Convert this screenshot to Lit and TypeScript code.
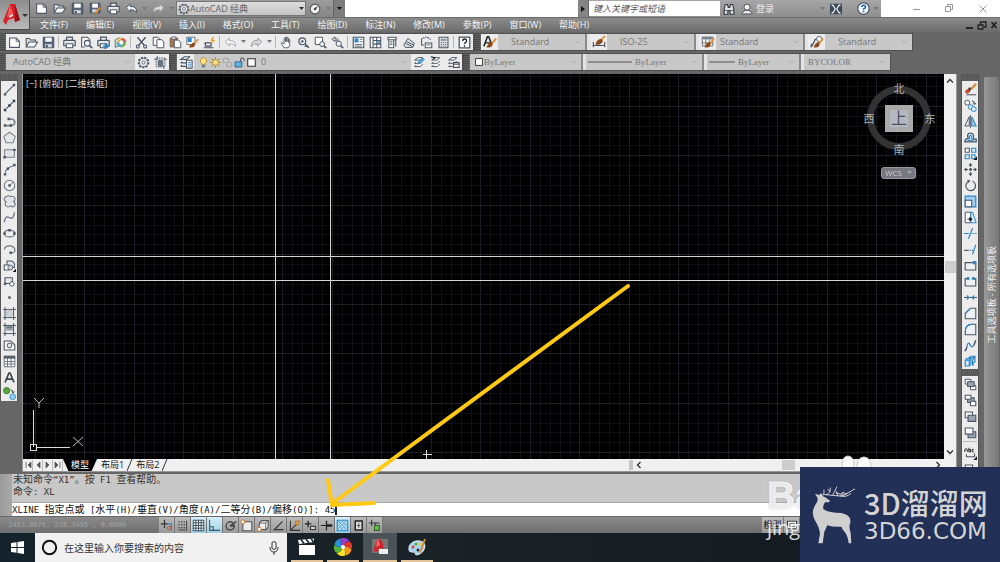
import { LitElement, html, svg, css, type TemplateResult } from "lit";
import { customElement, property } from "lit/decorators.js";
import { classMap } from "lit/directives/class-map.js";

/* ---------- icon set, drawn on a 16 x 16 board ---------- */
const S = "#4b5563";
const B = "#2f86c4";
const O = "#d9761e";

const sheet = svg`<path d="M2 2.500h8l4 4v7.500h-12z" fill="#fff" stroke=${S} stroke-width="1.3"/><path d="M10 2.500v4h4" fill="none" stroke=${S}/>`;
const printer = svg`<path d="M4.500 5V1.500h7V5M2 5.500h12q1 0 1 1V12h-14V6.500q0-1 1-1z" fill="#e8eaec" stroke=${S} stroke-width="1.5"/><path d="M4 9.500h8v5h-8z" fill="#fff" stroke=${S} stroke-width="1.3"/>`;
const gear = svg`<circle cx="8" cy="8" r="6.200" fill="none" stroke=${S} stroke-width="2" stroke-dasharray="2.600 1.600"/><circle cx="8" cy="8" r="5" fill="#eee" stroke=${S}/><circle cx="8" cy="8" r="2" fill="#fff" stroke=${S}/>`;
const brush = svg`<path d="M15 4l-5 6" stroke="#e39a4b" stroke-width="2.400"/><path d="M11 9l-2-1q-4 2-5 6q4 1 6.500-1.500z" fill="#8a4a1c"/>`;
const lens = svg`<circle cx="6.500" cy="6.500" r="4.200" fill="#eef4f8" stroke=${S} stroke-width="1.400"/><path d="M10 10l4.500 4.500" stroke=${S} stroke-width="2"/>`;
const layers = svg`<path d="M2 5h7l3-3H6zM2 9h7l3-3M2 9l1.500-1.500M2 13h7l3-3M2 13l1.500-1.500" fill="#fff" stroke=${S} stroke-width="1.200"/>`;

const ICONS: Record<string, TemplateResult> = {
  new: sheet,
  open: svg`<path d="M1.500 13V3h4l1.500 2h6v2" fill="#dfe3e6" stroke=${S} stroke-width="1.300"/><path d="M1.500 13.500l3.500-6h10.500l-4 6z" fill="#f4f6f7" stroke=${S} stroke-width="1.300"/>`,
  save: svg`<path d="M1.500 1.500h13v13h-13z" fill="#56657a" stroke="#3c4858"/><path d="M4 2h8v5H4z" fill="#fff"/><path d="M4 10h8v4H4z" fill="#d4d9de"/><path d="M5 11h2v3H5z" fill="#3c4858"/>`,
  saveAs: svg`<path d="M1.500 1.500h12v12h-12z" fill="#56657a" stroke="#3c4858"/><path d="M4 2h7v5H4z" fill="#fff"/><path d="M4 9h7v4H4z" fill="#d4d9de"/><path d="M15 7l-6 7-2 1 1-3 5-6z" fill="#f0a63c" stroke="#8a5a1c" stroke-width=".600"/>`,
  print: printer,
  preview: svg`<path d="M2 1.500h7l3 3v3M2 1.500v12h4" fill="#fff" stroke=${S} stroke-width="1.300"/><circle cx="9" cy="9" r="3.600" fill="#eef4f8" stroke=${S} stroke-width="1.300"/><path d="M11.500 11.500l3.500 3.500" stroke=${S} stroke-width="2"/>`,
  publish: svg`${printer}<path d="M7 12.500h5M10 9.500l4.500 3-4.500 3z" fill=${B} stroke=${B} stroke-width="1.500"/>`,
  globe: svg`<path d="M1.500 5l5-3v10l-5 2z" fill="#dfe3e6" stroke=${S}/><circle cx="9" cy="8" r="6" fill="#f6d25c"/><path d="M9 2a6 6 0 0 1 6 6H9z" fill="#e15b50"/><path d="M9 14a6 6 0 0 1-6-6h6z" fill="#49b0e0"/><path d="M15 8a6 6 0 0 1-6 6V8z" fill="#6dbb5a"/><path d="M9 4.500l3 1.700v3.600l-3 1.700-3-1.700V6.200z" fill="#fff" stroke=${S} stroke-width=".700"/>`,
  cut: svg`<path d="M3 1.500l8.500 10M13 1.500l-8.500 10" stroke=${S} stroke-width="1.700"/><circle cx="3.500" cy="13" r="1.900" fill="none" stroke=${S} stroke-width="1.300"/><circle cx="12.500" cy="13" r="1.900" fill="none" stroke=${S} stroke-width="1.300"/>`,
  copy: svg`<path d="M1.500 1.500h6l2 2v8h-8z" fill="#fff" stroke=${S} stroke-width="1.200"/><path d="M6 4.500h6l2.500 2.500v7.500H6z" fill="#fff" stroke=${S} stroke-width="1.200"/>`,
  paste: svg`<path d="M1.500 2.500h9v11h-9z" fill="#a7784e" stroke="#6d5a4a"/><path d="M3.500 1h5v3h-5z" fill="#d6d9dc" stroke=${S} stroke-width=".800"/><path d="M6.500 5h5l3 3v6.500h-8z" fill="#fff" stroke=${S} stroke-width="1.200"/>`,
  match: svg`<path d="M1 1.500h10v9H1z" fill="#fff" stroke=${S}/><path d="M2 2.500h5v5H2z" fill=${B}/>${brush}`,
  blockEdit: svg`<path d="M3 8.500h7v4H3zM1 14.500h12" fill="none" stroke=${S} stroke-width="1.400"/><path d="M12 1l-3 5h3l-1.500 4L15 5h-3l1.500-4z" fill="#f2a11e"/><path d="M1 10l2-2" stroke=${S}/>`,
  undo: svg`<path d="M1.500 7l5-4.500v3q8-.5 8 7.500q-2.500-4-8-3.500v3z" fill="#f2f3f4" stroke=${S} stroke-width="1.200"/>`,
  redo: svg`<path d="M14.500 7l-5-4.500v3q-8-.5-8 7.500q2.500-4 8-3.500v3z" fill="#d9dadb" stroke="#9a9da1" stroke-width="1.200"/>`,
  undoDim: svg`<path d="M1.500 7l5-4.500v3q8-.5 8 7.500q-2.500-4-8-3.500v3z" fill="#f4f4f4" stroke="#a3a6aa" stroke-width="1.100"/>`,
  pan: svg`<path d="M5 14.500L1.500 9q0-1.500 2-.5L5 10V3q1-1 1.700 0v4V1.700q1-1 1.800 0V7V2.300q1-1 1.800 0V8V4.500q1-1 1.700 0V10q0 3-1.500 4.500z" fill="#fff" stroke=${S} stroke-width="1.100"/>`,
  zoomRt: svg`${lens}<path d="M4.500 6.500h4M6.500 4.500v4" stroke=${S} stroke-width="1.200"/><path d="M9 13h4" stroke=${S}/>`,
  zoomWin: svg`<path d="M1.500 1.500h9v9h-9z" fill="#fff" stroke=${S} stroke-width="1.200"/><circle cx="10" cy="10" r="3" fill="#eef4f8" stroke=${S} stroke-width="1.200"/><path d="M12 12l3 3" stroke=${S} stroke-width="2"/>`,
  zoomPrev: svg`<path d="M1 4l4-3v2q5 0 4 4q-1-2-4-2v2z" fill="#cfd4d8" stroke=${S}/><circle cx="9.500" cy="9.500" r="3.200" fill="#eef4f8" stroke=${S} stroke-width="1.200"/><path d="M12 12l3 3" stroke=${S} stroke-width="2"/>`,
  props: svg`<path d="M1.500 1.500h13v13h-13z" fill="#fff" stroke=${S} stroke-width="1.400"/><path d="M3 3h5v5H3z" fill=${B}/><path d="M9.500 4h3.500M9.500 7h3.500M3.500 10.500h9M3.500 12.500h9" stroke=${S}/>`,
  design: svg`<path d="M1.500 1.500h13v13h-13zM5 1.500v13M5 5.500h9.500M5 10h9.500M9.500 2v12" fill="#fff" stroke=${S} stroke-width="1.300"/><path d="M10.500 6.500h3v3h-3z" fill=${B}/>`,
  toolPal: svg`<path d="M2.500 1.500h10v3h-10zM3.500 4.500h6v10h-6z" fill="#fff" stroke=${S} stroke-width="1.300"/><path d="M5 7h3M5 10h3M12 5v8" stroke=${S} stroke-width="1.300"/>`,
  sheetSet: svg`<path d="M1 11l5-8 8 6-2 5H3zM3 9l9 4M4.500 7l8.500 4" fill="#e3e6e9" stroke=${S} stroke-width="1.200"/>`,
  markup: svg`<path d="M2 5q0-3 3-2.500Q8 0 10 2.500q3 0 3 3" fill="none" stroke=${S} stroke-width="1.400" stroke-dasharray="2 1"/><path d="M6.500 8.500h8v6h-8zM2 5v6h3" fill="#fff" stroke=${S} stroke-width="1.300"/><path d="M8 11h5" stroke=${S}/>`,
  calc: svg`<path d="M2.500 1.500h11v13h-11z" fill="#e6e8ea" stroke=${S} stroke-width="1.300"/><path d="M4.500 3.500h7v2.500h-7z" fill="#8a939d"/><path d="M4.500 8h7M4.500 10.300h7M4.500 12.500h7" stroke=${S} stroke-dasharray="1.700 1"/>`,
  help: svg`<path d="M1.500 1.500h13v13h-13z" fill="#fff" stroke=${S} stroke-width="1.600"/><path d="M5.700 6q0-2.300 2.400-2.300T10.500 6q0 1.200-1.300 2T8 10M8 11.500v1.800" fill="none" stroke="#222" stroke-width="1.700"/>`,
  textStyle: svg`<path d="M1 13L5 2h1.500L10 11M2.500 9H8" fill="none" stroke="#222" stroke-width="1.700"/>${brush}`,
  dimStyle: svg`<path d="M1.500 8v6M14.500 8v6M2 12h12" stroke=${S} stroke-width="1.300"/><path d="M15 1l-5 5" stroke="#e39a4b" stroke-width="2.200"/><path d="M11 4.500q-6 0-7 6.500q6 1 8.500-4z" fill="#8a4a1c"/>`,
  tableStyle: svg`<path d="M1.500 2.500h12v10h-12zM1.500 9h12M5.500 3v9M9.500 3v9" fill="#fff" stroke=${S} stroke-width=".900"/><path d="M1 2h13v3H1z" fill="#7b8590"/>${brush}`,
  leaderStyle: svg`<path d="M2 13L6 5h3M1 14l1-4" fill="none" stroke=${S} stroke-width="1.400"/><circle cx="10.500" cy="4.500" r="3" fill="#fff" stroke=${S}/>${brush}`,
  gear,
  wsSave: svg`<path d="M2.500 2.500h11v11h-11z" fill="#c7ccd1" stroke=${S} stroke-dasharray="2 1.200"/><path d="M5 5h6v8H5z" fill="#67727e"/><path d="M0 4h4M12 4h4M4 0v4M12 12v4" stroke=${S}/>`,
  layerProps: svg`${layers}<path d="M8.500 6h6.500v9H8.500z" fill="#fff" stroke=${S} stroke-width="1.200"/><path d="M10 8.500h4M10 10.500h4M10 12.500h4" stroke=${B}/>`,
  layerCur: svg`${layers}<path d="M6 8l6-5 2 1-5 5z" fill="#57b6e8" stroke=${B}/>`,
  layerPrev: svg`${layers}<path d="M1 1l5 1-2 2" fill="none" stroke="#222" stroke-width="1.400"/>`,
  layerState: svg`${layers}<path d="M8 8h7v6H8zM8 10h7" fill="#fff" stroke=${S} stroke-width="1.300"/>`,
  bulb: svg`<path d="M8 1a4.500 4.500 0 0 1 2.500 8.300V11h-5V9.300A4.500 4.500 0 0 1 8 1z" fill="#ffe27a" stroke="#a8822c" stroke-width="1.100"/><path d="M5.500 12h5v3h-5z" fill="#6d7680"/>`,
  sun: svg`<path d="M8 0v16M0 8h16M2.300 2.300l11.400 11.400M13.700 2.300L2.300 13.700" stroke="#b58d36" stroke-width="1.500"/><circle cx="8" cy="8" r="4" fill="#ffe27a" stroke="#a8822c"/>`,
  freeze: svg`<path d="M2 2h7v6H2zM7 8h7v6H7z" fill="none" stroke="#a9a9a9" stroke-width="1.600"/>`,
  lock: svg`<path d="M9.500 7V4q0-2.500 2.500-2.500T14.500 4v2" fill="none" stroke=${S} stroke-width="1.500"/><path d="M1.500 7h10v7.500h-10z" fill="#5db3e6" stroke="#29597c" stroke-width="1.200"/>`,
  swatch: svg`<path d="M2.500 2.500h11v11h-11z" fill="#fff" stroke="#333" stroke-width="1.500"/>`,
  compass: svg`<circle cx="8" cy="8" r="6.500" fill="#eee" stroke="#555" stroke-width="1.500"/><path d="M12 4L9 9 7 7z" fill="#333"/><circle cx="8" cy="8" r="1.500" fill="#333"/>`,
  binoc: svg`<path d="M1.500 9l1.500-7h3l1 4h2l1-4h3l1.500 7v6h-5v-5H6.500v5h-5z" fill="#dfe1e3" stroke="#333b45" stroke-width="1.500"/><path d="M2 10h4M10 10h4" stroke="#333b45"/>`,
  user: svg`<circle cx="8" cy="5.500" r="4" fill="#f2f2f2" stroke="#444c55" stroke-width="1.200"/><path d="M1 14.500q1-3.500 5-4.500h4q4 1 5 4.500z" fill="#f2f2f2" stroke="#444c55" stroke-width="1.200"/>`,
  exchange: svg`<path d="M0 1h16v14H0z" fill="#3b4756"/><path d="M2 3h2l3 5-3 5H2M14 3h-2L9 8l3 5h2" fill="none" stroke="#e7ecf0" stroke-width="1.700"/>`,
  qmark: svg`<circle cx="8" cy="8" r="7" fill="#f2f5f8" stroke="#3b4756" stroke-width="1.300"/><path d="M5.800 6.300q0-2.300 2.300-2.300t2.300 2.200Q10.400 7.300 9 8T8 9.500M8 10.800v1.800" fill="none" stroke="#1f63b5" stroke-width="2"/>`,
  /* draw palette */
  line: svg`<path d="M2.500 13.500l11-11" stroke=${S} stroke-width="1.300"/><path d="M1 12.500h3v3H1zM12 1h3v3h-3z" fill=${S}/>`,
  xline: svg`<path d="M2 14L14 2" stroke=${S} stroke-width="1.300"/><path d="M1 15v-4l4 4zM15 1v4l-4-4zM6.500 6.500h3v3h-3z" fill="#2d3742"/>`,
  pline: svg`<path d="M2.500 13h8q4-.5 4-4t-4-4H7" fill="none" stroke="#7d8690" stroke-width="2"/><path d="M1 11.500h3v3H1zM8 11.500h3v3H8zM5.500 3.500h3v3h-3z" fill=${S}/>`,
  polygon: svg`<path d="M8 1.500l7 5.200L12.300 14.500H3.700L1 6.700z" fill="#e6e9ec" stroke="#7a848e" stroke-width="1.300"/>`,
  rect: svg`<path d="M2 3.500h12v9H2z" fill="#dfe2e6" stroke="#7a848e" stroke-width="1.300"/><path d="M.500 11h3v3h-3zM12.500 2h3v3h-3z" fill=${S}/>`,
  arc: svg`<path d="M2.500 14q0-8 11-11" fill="none" stroke="#6d7782" stroke-width="1.400"/><path d="M1 12.500h3v3H1zM12.500 1h3v3h-3zM4.500 5.500h3v3h-3z" fill=${S}/>`,
  circle: svg`<circle cx="8" cy="8" r="6.500" fill="#eceef0" stroke="#6d7782" stroke-width="1.300"/><path d="M8 8l4-3.500" stroke=${S}/><path d="M6.500 6.500h3v3h-3z" fill=${S}/>`,
  cloud: svg`<path d="M4 2q3-2 5 0q4-1.500 5.500 1.500q1 3-1.500 4.500q3 2 1.500 5Q12 16 9.500 13.500q-3 2.500-6 0q-2-3 .5-5q-3-1-2.500-4Q2 2.500 4 2z" fill="#e1e5e9" stroke="#6d7782" stroke-width="1.300"/>`,
  spline: svg`<path d="M1.500 14q1-8 5-6.500t4 1.500q3-1 3.500-7.500" fill="none" stroke="#6d7782" stroke-width="1.600"/>`,
  ellipse: svg`<ellipse cx="8" cy="8" rx="6.500" ry="4.200" fill="#eceef0" stroke="#6d7782" stroke-width="1.400"/><path d="M.500 6.500h3v3h-3zM12.500 6.500h3v3h-3zM6.500 2.500h3v3h-3z" fill=${S}/>`,
  ellArc: svg`<path d="M1.500 8q1-4.500 6.500-4.500T14.500 8t-5 4" fill="none" stroke="#6d7782" stroke-width="1.500"/><path d="M8 10.500h3v3H8z" fill=${S}/>`,
  insert: svg`<path d="M5 2.500h6l3 3v5H5z" fill="#e6e9ec" stroke=${S} stroke-width="1.300"/><path d="M1.500 7.500h6v6h-6z" fill="#fff" stroke=${S} stroke-width="1.300"/><circle cx="9" cy="10.500" r="3" fill="#cfd5da" stroke=${S}/><path d="M16 12v4h-4z" fill="#111"/>`,
  block: svg`<path d="M2.500 3.500h9v7h-9z" fill="#e6e9ec" stroke=${S} stroke-width="1.300"/><circle cx="11" cy="11" r="2.700" fill="#fff" stroke=${S} stroke-width="1.200"/><path d="M1 9.500h3v3H1z" fill=${S}/>`,
  point: svg`<path d="M6.500 6.500h3v3h-3z" fill=${S}/>`,
  hatch: svg`<path d="M2.500 0v16M0 3h16M13 0v16M0 13h16" stroke=${S} stroke-width="1.200"/><path d="M3 6l3-3M3 9l6-6M3 12l9-9M6 12l6-6M9 12l3-3" stroke="#8a939c"/>`,
  gradient: svg`<path d="M2.500 0v16M0 3h16M13 0v16M0 13h16" stroke=${S} stroke-width="1.200"/><path d="M4 4h8v3H4z" fill="#69737d"/><path d="M4 7h8v2.500H4z" fill="#9fa7ae"/>`,
  region: svg`<path d="M1.500 13.500v-11h8l5 5v6z" fill="#fff" stroke=${S} stroke-width="1.300"/><circle cx="8" cy="8" r="3" fill="#dde1e4" stroke=${S} stroke-width="1.200"/>`,
  table: svg`<path d="M1.500 1.500h13v13h-13zM1.500 8h13M1.500 11h13M5.500 4v10.500M10 4v10.500" fill="#fff" stroke="#6d7782" stroke-width="1.200"/><path d="M1 1h14v3.500H1z" fill="#56616d"/>`,
  mtext: svg`<path d="M2.500 14L7.300 2.500h1.400L13.500 14M4.500 10h7" fill="none" stroke="#3a444f" stroke-width="2"/>`,
  addSel: svg`<circle cx="4.500" cy="4.500" r="3.800" fill="#55a83e" stroke="#2f6b1f"/><circle cx="12" cy="12" r="3.500" fill="#8fd0f5" stroke=${B}/><path d="M9.500 3.500q3 0 3 3M11 5.500l1.500 2 1.500-2" fill="none" stroke="#222"/>`,
  /* modify palette */
  erase: svg`<path d="M15 1L8.500 7.500" stroke="#d98c3f" stroke-width="3"/><path d="M9 7l-2-2-3 3 3 3.500z" fill="#5b4030"/><circle cx="4" cy="10.500" r="2.600" fill="#d64a2c"/><path d="M3 14.500h12" stroke=${S} stroke-width="1.300"/>`,
  copyObj: svg`<circle cx="4" cy="4.500" r="3" fill="#fff" stroke=${S} stroke-width="1.200"/><circle cx="8.500" cy="10" r="3" fill="#d9eefb" stroke=${B} stroke-width="1.200"/><circle cx="12" cy="12.500" r="3" fill="#d9eefb" stroke=${B} stroke-width="1.200"/><path d="M10 2.500q3 0 3 3M11.500 5l1.500 2 1.500-2" fill="none" stroke="#222"/>`,
  mirror: svg`<path d="M6.500 2v11.500H1z" fill="#e6e9ec" stroke=${S} stroke-width="1.200"/><path d="M9.500 2v11.500H15z" fill="#9fd2f2" stroke=${B} stroke-width="1.300"/><path d="M8 0v16" stroke=${S}/>`,
  offset: svg`<path d="M1 13.500h14V10h-3.500Q13 2.500 8 2.500T5 9Q1 9.500 1 13.500z" fill="#cfe9fa" stroke=${S} stroke-width="1.600"/><path d="M4 11.500h8M7 10q-1-4.500 1-4.500t1.500 4.500" fill="none" stroke=${B} stroke-width="1.400"/>`,
  array: svg`<path d="M1.500 1.500h5v5h-5z" fill="#fff" stroke=${S} stroke-width="1.300"/><path d="M9.500 1.500h5v5h-5zM1.500 9.500h5v5h-5zM9.500 9.500h4v5h-4z" fill="#d9eefb" stroke=${B} stroke-width="1.400"/><path d="M16 11.500V16h-4.500z" fill="#111"/>`,
  move: svg`<path d="M8 2v12M2 8h12" stroke=${S} stroke-width="1.300" stroke-dasharray="3 1.500"/><path d="M8 0l2.500 3h-5zM8 16l2.500-3h-5zM0 8l3-2.500v5zM16 8l-3-2.500v5z" fill="#3b4652"/><path d="M6.500 6.500h3v3h-3z" fill=${S}/>`,
  rotate: svg`<path d="M5.500 3a6 6 0 1 0 5-.200" fill="none" stroke=${S} stroke-width="1.400"/><path d="M4 .500l4 1.500-3 3z" fill=${S}/>`,
  scale: svg`<path d="M1.500 1.500h13v13h-13z" fill="#9fd2f2" stroke=${B} stroke-width="1.500"/><path d="M1.500 6.500h8v8h-8z" fill="#fff" stroke=${S} stroke-width="1.300"/>`,
  stretch: svg`<path d="M1.500 1.500h7v13h-7z" fill="#fff" stroke=${S} stroke-width="1.200"/><path d="M8.500 1.500h2l4.500 13H8.500z" fill="#d9eefb" stroke=${B} stroke-width="1.200"/><path d="M4 10h5M7 8l3 2-3 2z" fill="#111" stroke="#111"/>`,
  trim: svg`<path d="M0 8h6M10 8h2M13.500 8h2" stroke=${B} stroke-width="1.500"/><path d="M10.500 1.500l-5 13" stroke=${B} stroke-width="1.500"/>`,
  extend: svg`<path d="M0 9h6" stroke=${S} stroke-width="1.400"/><path d="M7 9h4" stroke=${B} stroke-width="1.600" stroke-dasharray="1.500 1"/><path d="M14.500 2l-4 12" stroke=${B} stroke-width="1.500"/>`,
  breakPt: svg`<path d="M1.500 4.500h13v9h-13z" fill="#eef1f3" stroke=${S} stroke-width="1.400"/><path d="M11 2.500h4v4h-4z" fill=${B}/>`,
  breakObj: svg`<path d="M4 4.500H1.500v9h13v-9H12" fill="#eef1f3" stroke=${S} stroke-width="1.400"/><path d="M3.500 2.500h3v3.500h-3zM10 2.500h3v3.500h-3z" fill=${B}/>`,
  join: svg`<path d="M0 8h16" stroke=${S} stroke-width="1.300"/><path d="M3.500 4.500L7 8l-3.500 3.500zM12.500 4.500L9 8l3.500 3.500z" fill=${B}/>`,
  chamfer: svg`<path d="M1.500 14.500V8L8 1.500h6.500v13z" fill="#eef1f3" stroke=${S} stroke-width="1.300"/><path d="M1.500 8L8 1.500" stroke=${B} stroke-width="1.600"/>`,
  fillet: svg`<path d="M1.500 14.500V11q0-9.500 9-9.500h4v13z" fill="#eef1f3" stroke=${S} stroke-width="1.300"/><path d="M1.500 11q0-9.500 9-9.500" fill="none" stroke=${B} stroke-width="1.600"/>`,
  blend: svg`<path d="M1 15q2-2 2.500-5" fill="none" stroke=${S} stroke-width="1.800"/><path d="M3.500 10Q5 2 7.500 7t4.500 1" fill="none" stroke=${B} stroke-width="1.600"/><path d="M12 8l2.500-6.500" stroke=${S} stroke-width="1.800"/>`,
  explode: svg`<path d="M1.500 6.500l2-2h5v7l-2 2h-5zM1.500 6.500h5v7M6.500 6.500l2-2" fill="#cfe9fa" stroke=${B} stroke-width="1.400"/><path d="M6 3.500l2-2h5l-2 2zM10.500 6l3-3v5l-3 3zM10 13l2-1" fill="#cfe9fa" stroke=${B} stroke-width="1.400"/>`,
  front: svg`<path d="M1.500 1.500h7v6h-7zM8 9h6.500v5.500H8z" fill="#fff" stroke=${S} stroke-width="1.200"/><path d="M4.500 4.500h8v6h-8z" fill="#9aa5b4" stroke=${S} stroke-width="1.300"/>`,
  back: svg`<path d="M4.500 4.500h8v6h-8z" fill="#9aa5b4" stroke=${S} stroke-width="1.300"/><path d="M1.500 1.500h7v5h-7zM8 9h6.500v5.500H8z" fill="#fff" stroke=${S} stroke-width="1.300"/>`,
  above: svg`<path d="M1.500 2.500h9v7h-9z" fill="#fff" stroke=${S} stroke-width="1.300"/><path d="M5 6.500h9.500v7.500H5z" fill="#9aa5b4" stroke=${S} stroke-width="1.300"/>`,
  under: svg`<path d="M5 7h9.500v7.500H5z" fill="#9aa5b4" stroke=${S} stroke-width="1.300"/><path d="M1.500 2.500h9.500v7.500H1.500z" fill="#fff" stroke=${S} stroke-width="1.300"/>`,
  textFront: svg`<path d="M1 6V3l1.500-1L4 3v3M6 1v5h2V3H6M12 3h-2v3h2" fill="none" stroke="#222" stroke-width="1.200"/><path d="M3 9v3h10V8" fill="none" stroke=${S} stroke-width="1.300"/><path d="M16 11.500V16h-4.500z" fill="#111"/>`,
  /* status toggles */
  infer: svg`<path d="M5.500 1v10M1 6h9" stroke="#333" stroke-width="1.500"/><path d="M9 6h5v8" fill="none" stroke=${B} stroke-width="1.500"/><circle cx="11" cy="11" r="2" fill="none" stroke="#c4491d"/>`,
  snap: svg`<path d="M3 3.500h8M3 7h8M3 10.500h8" stroke="#444" stroke-width="1.600" stroke-dasharray="1.600 1.600"/><path d="M13 2v12M3 13.500h10" stroke="#444" stroke-width="1.200"/>`,
  grid: svg`<path d="M1.500 1.500h13v13h-13zM4.700 1.500v13M8 1.500v13M11.300 1.500v13M1.500 4.700h13M1.500 8h13M1.500 11.300h13" fill="#eef7fb" stroke="#33414f" stroke-width="1.100"/>`,
  ortho: svg`<path d="M2 1v13h13M2 9.500h4.500V14" fill="none" stroke="#3d5a6e" stroke-width="1.300"/>`,
  polar: svg`<circle cx="7.500" cy="8.500" r="5" fill="none" stroke="#333" stroke-width="1.400"/><path d="M7.500 8.500L15 3M7.500 8.500H13" stroke="#333" stroke-width="1.400"/>`,
  osnap: svg`<path d="M3.500 3.500h11v11h-11z" fill="#eee" stroke="#555" stroke-width="1.300"/><circle cx="3.500" cy="3.500" r="2.400" fill="#fff" stroke=${O} stroke-width="1.200"/>`,
  osnap3d: svg`<path d="M4 5l3-3h8v8l-3 3H4z" fill="#eee" stroke="#555" stroke-width="1.300"/><path d="M4 5h8v8M12 5l3-3" fill="none" stroke="#555"/><circle cx="4" cy="12.500" r="2.400" fill="#fff" stroke=${O} stroke-width="1.200"/>`,
  otrack: svg`<path d="M13 3L3 13h11" fill="none" stroke="#333" stroke-width="1.500"/>`,
  ducs: svg`<path d="M3 2v12h12M3 14l8-8" fill="none" stroke="#333" stroke-width="1.300"/><path d="M9 3l5-1-1 5-2.500 1z" fill="#f0a63c" stroke="#a5671b"/>`,
  dyn: svg`<path d="M5 2v8M1 6h8" stroke="#222" stroke-width="1.600"/><path d="M8 9h6v4H8z" fill="#ddd" stroke="#222" stroke-width="1.200"/>`,
  lwt: svg`<path d="M1 8h14M8 2v12" stroke="#222" stroke-width="1.500"/><path d="M8 8h7" stroke="#222" stroke-width="3"/>`,
  tpy: svg`<path d="M1.500 1.500h13v13h-13z" fill="#bfe2f6" stroke=${B} stroke-width="1.400"/><path d="M2 5l3-3M2 9l7-7M2 13l11-11M5 14l9-9M9 14l5-5M3 3l10 10M3 8l5 5M8 3l5 5" stroke="#3c8cc4" stroke-width=".800"/>`,
  qp: svg`<path d="M4 2.500h8.500v11H4z" fill="#ddd" stroke="#222" stroke-width="1.800"/><path d="M8.300 5v6M6 8h4" stroke="#444"/>`,
  sc: svg`<path d="M4.500 1v8M1 5h13M9 5v5" fill="none" stroke="#333" stroke-width="1.300"/><path d="M8 8h6v6H8z" fill="#6dbb5a" stroke="#2f6b1f" stroke-width="1.300"/>`,
  drawing: svg`<path d="M2 3h12v10H2z" fill="#f2f2f2" stroke="#444" stroke-width="1.400"/><path d="M5 6h6v4H5z" fill="none" stroke="#444"/>`,
};

@customElement("cad-icon")
export class CadIcon extends LitElement {
  @property() name = "new";
  @property({ type: Number }) size = 14;
  static styles = css`
    :host { display: inline-flex; flex: none; }
    svg { display: block; }
  `;
  render() {
    return html`<svg width=${this.size} height=${this.size} viewBox="0 0 16 16" fill="none" aria-hidden="true">${ICONS[this.name]}</svg>`;
  }
}

const range = (n: number) => Array.from({ length: n }, (_, i) => i);

const MENUS = ["文件(F)", "编辑(E)", "视图(V)", "插入(I)", "格式(O)", "工具(T)", "绘图(D)", "标注(N)", "修改(M)", "参数(P)", "窗口(W)", "帮助(H)"];
const QUICK = ["new", "open", "save", "saveAs", "print", "undo", "v", "redo", "v"];
const STANDARD = ["new", "open", "save", "|", "print", "preview", "publish", "globe", "|", "cut", "copy", "paste", "match", "blockEdit", "|", "undoDim", "v", "redo", "v", "|", "pan", "zoomRt", "zoomWin", "zoomPrev", "|", "props", "design", "toolPal", "sheetSet", "markup", "calc", "|", "help"];
const STYLES = [
  { icon: "textStyle", label: "文字样式", value: "Standard", deep: true },
  { icon: "dimStyle", label: "标注样式", value: "ISO-25", deep: true },
  { icon: "tableStyle", label: "表格样式", value: "Standard", deep: false },
  { icon: "leaderStyle", label: "多重引线样式", value: "Standard", deep: true },
];
const DRAW = ["line", "xline", "pline", "polygon", "rect", "arc", "circle", "cloud", "spline", "ellipse", "ellArc", "insert", "block", "point", "hatch", "gradient", "region", "table", "mtext", "addSel"];
const MODIFY = ["erase", "copyObj", "mirror", "offset", "array", "move", "rotate", "scale", "stretch", "trim", "extend", "breakPt", "breakObj", "join", "chamfer", "fillet", "blend", "explode"];
const ORDER = ["front", "back", "above", "under", "|", "textFront", "above"];
const TOGGLES = ["infer", "snap", "grid", "ortho", "polar", "osnap", "osnap3d", "otrack", "ducs", "dyn", "lwt", "tpy", "qp", "sc"];
const ACTIVE = new Set(["grid", "ortho", "tpy"]);

@customElement("app-root")
export class AppRoot extends LitElement {
  static styles = css`
    :host {
      display: flex; flex-direction: column; position: relative;
      height: 100vh; overflow: hidden; background: #666;
      font: 9px/12px "Open Sans", "Noto Sans CJK SC", sans-serif; color: #222;
    }
    * { box-sizing: border-box; }
    button, input, select { font: inherit; color: inherit; border: 0; border-radius: 0; margin: 0; padding: 0; background: none; outline: none; }
    button { display: flex; align-items: center; justify-content: center; flex: none; }
    select { appearance: none; flex: 1; min-width: 0; height: 100%; }
    svg { display: block; flex: none; }

    .header { display: grid; grid-template-columns: 30px 1fr; grid-template-rows: 18px 14px; flex: none; }
    .logo { grid-row: 1 / 3; height: 30px; background: linear-gradient(#8d8d8d, #b9b9b9); border: 1px solid #4c4c4c; border-top: 0; border-left: 0; }
    .titlebar { display: flex; background: #fff; border-bottom: 1px solid #6c6c6c; }
    .quick { display: flex; align-items: center; padding-left: 2px; background: linear-gradient(#9c9c9c, #868686); }
    .quick .tool { width: 18px; }
    .quick .more { width: 12px; height: 17px; background: #7c7c7c; border-left: 1px solid #666; }
    .caption { flex: 1; }
    .info { display: flex; align-items: center; width: 303px; background: linear-gradient(#a6a6a6, #8e8e8e); }
    .info .step { width: 11px; height: 100%; background: #858585; border-right: 1px solid #666; }
    .info .find { width: 131px; height: 15px; padding: 0 4px; background: #fff; font-style: italic; color: #555; }
    .find::placeholder { color: #555; opacity: 1; }
    .info .tool { width: 18px; }
    .login { color: #eee; }
    .space { flex: 1; }
    .window { display: flex; width: 119px; padding-left: 19px; }
    .window button { flex: 1; }
    .menubar { display: flex; align-items: center; gap: 18px; padding: 0 1px 0 10px; background: linear-gradient(#8b8b8b, #6c6c6c); color: #f4f4f4; }
    .menubar button { white-space: nowrap; }
    .mdi { display: flex; gap: 3px; margin-left: auto; }

    .bars { display: flex; align-items: center; height: 20px; flex: none; gap: 2px; }
    .strip { display: flex; align-items: center; height: 16px; background: #ececec; outline: 1px solid #4f4f4f; }
    .grip { width: 6px; height: 100%; flex: none; background: repeating-linear-gradient(#5f5f5f 0 1px, #4a4a4a 1px 2px); border-right: 1px solid #666; }
    .tick { width: 3px; height: 12px; border-left: 1px solid #b5b5b5; margin-left: 1px; flex: none; }
    .split { width: 5px; height: 100%; flex: none; background: #e4e4e4; border-left: 2px solid #8a8a8a; }
    .tool { width: 17px; height: 16px; }
    .drop { width: 9px; height: 16px; }
    .combo { display: flex; align-items: center; height: 16px; background: #c8c8c8; color: #777; padding: 0 4px; }
    .style { width: 87px; }
    .deep { padding-left: 13px; }
    .workspace { width: 129px; padding-left: 7px; }
    .layer { width: 217px; gap: 1px; }
    .layer select { padding-left: 3px; }
    .prop { font-family: "Liberation Serif", serif; }
    .colour { width: 111px; }
    .linetype { width: 116px; gap: 3px; padding-left: 2px; }
    .weight { width: 92px; gap: 3px; padding-left: 2px; }
    .plot { width: 86px; padding-left: 4px; }
    .space-list { width: 130px; height: 15px; color: #666; background: linear-gradient(#dedede, #c4c4c4); border: 1px solid #777; padding: 0 1px; }

    .main { display: flex; flex: 1; min-height: 0; padding-top: 2px; }
    .palette { display: flex; flex-direction: column; align-items: center; width: 18px; align-self: flex-start; background: #ececec; border: 1px solid #555; border-width: 0 1px; flex: none; }
    .palette .hgrip { width: 100%; height: 7px; background: repeating-linear-gradient(90deg, #666 0 1px, #505050 1px 2px); flex: none; border: 2px solid #5a5a5a; }
    .palette button { width: 16px; height: 16px; }
    .palette .rule { width: 14px; height: 4px; border-top: 1px solid #bbb; margin-top: 1px; flex: none; }
    .modify { align-self: stretch; overflow: hidden; margin-left: 4px; }
    .sheet { display: grid; grid-template-columns: 1fr 12px; grid-template-rows: 1fr 12px; flex: 1; min-width: 0; margin-left: 4px; border: 1px solid #999; border-width: 0 1px 1px 1px; }
    .model { position: relative; overflow: hidden; background: #000; color: #ddd; }
    .drawing { position: absolute; inset: 0; width: 100%; height: 100%; }
    .label { position: absolute; left: 3px; top: 4px; }
    .cube { position: absolute; right: 4px; top: 4px; }
    .wcs { position: absolute; right: 28px; top: 93px; width: 35px; height: 12px; gap: 5px; border-radius: 3px; border: 1px solid #9a9aa4; background: #77777f; color: #ccc; font-size: 8px; }
    .vscroll { display: flex; flex-direction: column; align-items: center; background: #f0f0f0; }
    .vscroll button { width: 12px; height: 14px; }
    .vscroll .thumb { width: 11px; height: 12px; background: #cdcdcd; }
    .corner { background: #f0f0f0; }
    .tabs { display: flex; align-items: center; background: #f0f0f0; color: #111; overflow: hidden; }
    .tabs .nav { width: 10px; height: 11px; border-right: 1px solid #bbb; }
    .tabs .tab { padding: 0 3px; height: 12px; }
    .tabs .on { color: #fff; background: #000; padding: 0 8px; margin-right: 1px; clip-path: polygon(0 0, 100% 0, 84% 100%, 16% 100%); }
    .hscroll { display: flex; align-items: center; width: 315px; height: 100%; margin-left: auto; }
    .hscroll .bar { width: 4px; height: 10px; background: #c4c4c4; }
    .hscroll .thumb { width: 13px; height: 10px; background: #cdcdcd; }
    .hscroll button { width: 12px; height: 12px; }
    .tools { width: 15px; margin: 3px 1px 0 5px; padding-top: 40px; flex: none; border-radius: 2px; background: linear-gradient(90deg, #999, #777); display: flex; align-items: center; justify-content: center; color: #eee; }
    .tools span { writing-mode: vertical-rl; text-orientation: sideways; transform: rotate(180deg); white-space: nowrap; }

    .command { display: grid; grid-template-columns: 12px 1fr; height: 45px; padding-top: 2px; flex: none; border-bottom: 1px solid #666; color: #333; font-size: 10px; }
    .cgrip { background: linear-gradient(90deg, #9a9a9a, #aaa); }
    .lines { display: grid; grid-template-rows: 1fr 13px; }
    .history { background: #c8c8c8; line-height: 11px; padding-left: 1px; border-bottom: 1px solid #aaa; }
    .history p { margin: 0; white-space: pre; }
    .m { font-family: "DejaVu Sans Mono", monospace; font-size: 9px; }
    .prompt { display: flex; align-items: center; background: #fff; color: #111; line-height: 12px; white-space: pre; }
    .prompt input { field-sizing: content; }
    .caret { width: 2px; height: 11px; background: #222; }

    .status { display: flex; align-items: center; height: 16px; flex: none; background: linear-gradient(#8a8a8a, #6f6f6f); }
    .coords { width: 159px; padding-left: 8px; color: #a2a2a2; font-family: "DejaVu Sans Mono", monospace; font-size: 7px; white-space: pre; }
    .status button { width: 16px; height: 16px; border: 1px solid #777; border-width: 0 1px 0 0; background: linear-gradient(#bbb, #999); }
    .status .on { background: linear-gradient(#d8eef6, #9cd0e2); }
    .status .mode { width: 22px; color: #111; }
    .tray { width: 200px; }

    .taskbar { display: flex; height: 29px; flex: none; background: linear-gradient(90deg, #14222c, #1a2226 45%, #10181e); }
    .start { width: 35px; }
    .search { display: flex; align-items: center; gap: 6px; width: 252px; padding: 0 8px 0 6px; background: #f1f1f1; color: #333; font-size: 10px; }
    .search input { flex: 1; min-width: 0; }
    .search input::placeholder { color: #333; opacity: 1; }
    .apps { display: flex; gap: 4px; padding-left: 4px; }
    .apps button { width: 32px; height: 29px; border-bottom: 2px solid #e4c49a; }
    .apps .front { width: 34px; background: #4a5357; }

    .arrow { position: absolute; left: 0; top: 0; width: 100%; height: 100%; pointer-events: none; }
    .mark { position: absolute; left: 767px; top: 453px; width: 110px; height: 90px; color: rgba(250, 250, 250, 0.85); pointer-events: none; }
    .mark .big { font: bold 39px/40px "Liberation Sans", sans-serif; padding-top: 23px; text-shadow: 0 0 2px rgba(120, 120, 120, 0.7); -webkit-text-stroke: 1px rgba(250, 250, 250, 0.8); }
    .mark .small { font: 20px/24px "Open Sans", sans-serif; }
    .toes { position: absolute; left: 72px; top: 0; }
    .brand { position: absolute; right: 0; bottom: 0; width: 200px; height: 95px; display: flex; align-items: center; gap: 8px; padding-left: 12px; background: #222f56; color: #d4d4d4; }
    .brand .name { font: 500 29px/32px "Noto Sans CJK SC", sans-serif; white-space: nowrap; }
    .brand .site { font: 23px/26px "DejaVu Sans", sans-serif; }
  `;

  private chevron(color = "#aaa") {
    return html`<svg width="7" height="6" viewBox="0 0 7 6"><path d="M1 1.500l2.500 2.500L6 1.500" fill="none" stroke=${color} /></svg>`;
  }
  private wedge(color = "#555") {
    return html`<svg width="5" height="4" viewBox="0 0 5 4"><path d="M0 0h5L2.500 3z" fill=${color} /></svg>`;
  }
  private angle(d: string) {
    return html`<svg width="8" height="8" viewBox="0 0 8 8"><path d=${d} fill="none" stroke="#333" stroke-width="1.400" /></svg>`;
  }
  private tool(name: string, size = 14) {
    if (name === "|") return html`<span class="tick"></span>`;
    if (name === "v") return html`<button class="drop" aria-label="more">${this.wedge("#777")}</button>`;
    return html`<button class="tool" aria-label=${name}><cad-icon name=${name} size=${size}></cad-icon></button>`;
  }
  private pick(label: string, value: string) {
    return html`<select aria-label=${label}><option>${value}</option></select>`;
  }
  /* Latin runs are set in the monospace face, ideographs in the default one. */
  private mono(text: string) {
    return text.split(/([\u0020-\u007e“”]+)/).map((part, i) => (i % 2 ? html`<span class="m">${part}</span>` : part));
  }

  private header() {
    return html`<header class="header">
      <button class="logo" aria-label="AutoCAD">
        <svg width="28" height="28" viewBox="0 0 28 28">
          <path d="M2 20L9 3l5 0 5 16-5 2-1-4-6 2-2 5z" fill="#d8202a" />
          <path d="M9 3l3 10-6 3z" fill="#ef5a5a" /><path d="M14 3l5 16-5 2z" fill="#96121a" />
          <path d="M8 15l4-2 0 2-4 2z" fill="#eee" /><path d="M21 13h6l-3 3z" fill="#333" />
        </svg>
      </button>
      <div class="titlebar">
        <div class="quick">
          ${QUICK.map((n) => this.tool(n, 13))}
          <div class="combo space-list"><cad-icon name="gear" size="12"></cad-icon>${this.pick("工作空间", "AutoCAD 经典")}${this.wedge("#333")}</div>
          ${this.tool("compass", 12)}${this.tool("v")}
          <button class="more" aria-label="自定义">${this.wedge("#111")}</button>
        </div>
        <div class="caption"></div>
        <div class="info">
          <button class="step" aria-label="collapse"><svg width="4" height="6" viewBox="0 0 4 6"><path d="M0 0l4 3-4 3z" fill="#111" /></svg></button>
          <input class="find" aria-label="搜索" placeholder="键入关键字或短语" />
          ${this.tool("binoc", 12)}${this.tool("user", 12)}
          <button class="login">登录</button>
          <span class="space"></span>${this.tool("v")}${this.tool("exchange", 12)}
          <span class="drop"></span>${this.tool("qmark", 13)}${this.tool("v")}
        </div>
        <div class="window">
          <button aria-label="最小化"><svg width="8" height="8"><path d="M0 4.500h7" stroke="#999" /></svg></button>
          <button aria-label="还原"><svg width="9" height="9"><path d="M.5 2.500h5v5h-5zM2.500 2V.500h5v5H6" fill="none" stroke="#999" /></svg></button>
          <button aria-label="关闭"><svg width="8" height="8"><path d="M.5.500l7 7M7.500.500l-7 7" stroke="#999" /></svg></button>
        </div>
      </div>
      <nav class="menubar">
        ${MENUS.map((m) => html`<button>${m}</button>`)}
        <div class="mdi">
          <button aria-label="最小化图形"><svg width="9" height="8"><path d="M1 7h7" stroke="#222" stroke-width="2" /></svg></button>
          <button aria-label="还原图形"><svg width="10" height="9"><path d="M1 4h5v4H1zM3.500 3.500V1H9v5H7" fill="none" stroke="#222" stroke-width="1.300" /></svg></button>
          <button aria-label="关闭图形"><svg width="9" height="8"><path d="M1.500 1l5 6M6.500 1l-5 6" stroke="#222" stroke-width="1.700" /></svg></button>
        </div>
      </nav>
    </header>`;
  }

  private bars() {
    return html`<div class="bars">
        <div class="strip"><span class="grip"></span>${STANDARD.map((n) => this.tool(n, 13))}</div>
        <div class="strip"><span class="grip"></span>
          ${STYLES.map((s, i) => html`${i ? html`<span class="split"></span>` : ""}${this.tool(s.icon)}
            <div class=${classMap({ combo: true, style: true, deep: s.deep })}>${this.pick(s.label, s.value)}${this.chevron()}</div>`)}
        </div>
      </div>
      <div class="bars">
        <div class="strip"><span class="grip"></span>
          <div class="combo workspace">${this.pick("工作空间", "AutoCAD 经典")}${this.chevron()}</div>
          ${this.tool("gear", 13)}${this.tool("wsSave", 13)}
        </div>
        <div class="strip"><span class="grip"></span>${this.tool("layerProps")}
          <div class="combo layer">
            ${["bulb", "sun", "freeze", "lock", "swatch"].map((n) => html`<cad-icon name=${n} size="11"></cad-icon>`)}
            ${this.pick("图层", "0")}${this.chevron()}
          </div>
          ${["layerCur", "layerPrev", "layerState"].map((n) => this.tool(n, 13))}
        </div>
        <div class="strip prop"><span class="grip"></span>
          <div class="combo colour"><cad-icon name="swatch" size="10"></cad-icon>${this.pick("颜色", "ByLayer")}${this.chevron()}</div>
          <span class="split"></span>
          <div class="combo linetype"><svg width="44" height="2"><path d="M0 1h44" stroke="#555" /></svg>${this.pick("线型", "ByLayer")}${this.chevron()}</div>
          <span class="split"></span>
          <div class="combo weight"><svg width="26" height="2"><path d="M0 1h26" stroke="#555" /></svg>${this.pick("线宽", "ByLayer")}${this.chevron()}</div>
          <span class="split"></span>
          <div class="combo plot">${this.pick("打印样式", "BYCOLOR")}${this.chevron()}</div>
        </div>
      </div>`;
  }

  private model() {
    const step = 9.9;
    return html`<section class="model">
      <svg class="drawing" shape-rendering="crispEdges">
        ${range(200).map((i) => svg`<path d="M${Math.round(2 + i * step)}.5 0V2000" stroke=${i % 5 === 1 ? "#1d1d2a" : "#0f0f14"} />`)}
        ${range(120).map((i) => svg`<path d="M0 ${Math.round(2 + i * step)}.5H3000" stroke=${i % 5 === 3 ? "#1d1d2a" : "#0f0f14"} />`)}
        <path d="M0 182.500H3000M0 206.500H3000M252.500 0V2000M307.500 0V2000" stroke="#d6d6cc" />
        <path d="M399.500 380.500h9M403.500 376v9" stroke="#ddd" />
        <path d="M10.500 336v37M14 373.500h33M7.500 370.500h6v6h-6z" fill="none" stroke="#ddd" />
        <path d="M11 324l5 5 5-5M16 329v5M50 363l10 9M60 363l-10 9" fill="none" stroke="#bbb" shape-rendering="auto" />
      </svg>
      <span class="label">[−] [俯视] [二维线框]</span>
      <svg class="cube" width="80" height="86" viewBox="0 0 80 86" font-size="11" fill="#b5b5b5" text-anchor="middle">
        <circle cx="39" cy="40" r="28.500" fill="none" stroke="#333" stroke-width="7" />
        <path d="M25 27h28v27H25z" fill="#a9a9a9" /><path d="M30 32h18v17H30z" fill="#b5b8c0" />
        <text x="39" y="46" font-size="16" fill="#4c505c">上</text>
        <text x="39" y="15">北</text><text x="39" y="76">南</text><text x="9" y="45">西</text><text x="70" y="45">东</text>
      </svg>
      <button class="wcs">WCS ${this.wedge("#aaa")}</button>
    </section>`;
  }

  private main() {
    const strip = (names: string[]) => names.map((n) => (n === "|" ? html`<span class="rule"></span>` : html`<button aria-label=${n}><cad-icon name=${n} size="13"></cad-icon></button>`));
    return html`<main class="main">
      <div class="palette"><span class="hgrip"></span>${strip(DRAW)}</div>
      <div class="sheet">
        ${this.model()}
        <div class="vscroll">
          <button aria-label="上">${this.angle("M1 5.500l3-3 3 3")}</button><span class="space"></span><span class="thumb"></span><span class="space"></span>
          <button aria-label="下">${this.angle("M1 2.500l3 3 3-3")}</button>
        </div>
        <div class="tabs">
          ${["M2 1v6M7 1L4 4l3 3z", "M6 1L3 4l3 3z", "M2 1l3 3-3 3z", "M1 1l3 3-3 3zM6 1v6"].map((d) => html`<button class="nav" aria-label="布局导航"><svg width="8" height="8"><path d=${d} fill="#555" stroke="#555" stroke-width=".8" /></svg></button>`)}
          <button class="tab on">模型</button>
          <button class="tab">布局1</button><svg width="6" height="12"><path d="M0 12L5 0" stroke="#333" /></svg>
          <button class="tab">布局2</button><svg width="6" height="12"><path d="M0 12L5 0" stroke="#333" /></svg>
          <div class="hscroll"><span class="bar"></span><button aria-label="左">${this.angle("M5.500 1l-3 3 3 3")}</button>
            <span class="space"></span><span class="thumb"></span><span class="space"></span>
            <button aria-label="右">${this.angle("M2.500 1l3 3-3 3")}</button></div>
        </div>
        <div class="corner"></div>
      </div>
      <div class="palette modify"><span class="hgrip"></span>${strip(MODIFY)}<span class="hgrip"></span>${strip(ORDER)}</div>
      <aside class="tools"><span>工具选项板 - 所有选项板</span></aside>
    </main>`;
  }

  private footer() {
    return html`<section class="command">
        <div class="cgrip"></div>
        <div class="lines">
          <div class="history"><p>${this.mono("未知命令“X1”。按 F1 查看帮助。")}</p><p>${this.mono("命令: XL")}</p></div>
          <div class="prompt">
            <label for="cmd">${this.mono("XLINE 指定点或 [水平(H)/垂直(V)/角度(A)/二等分(B)/偏移(O)]: ")}</label><input id="cmd" class="m" value="45" /><span class="caret"></span>
          </div>
        </div>
      </section>
      <div class="status">
        <span class="coords">2483.8678, 238.3495 , 0.0000</span>
        ${TOGGLES.map((n) => html`<button class=${classMap({ on: ACTIVE.has(n) })} aria-label=${n}><cad-icon name=${n} size="13"></cad-icon></button>`)}
        <span class="space"></span><button class="mode">模型</button>
        <button aria-label="drawing"><cad-icon name="drawing" size="12"></cad-icon></button><span class="tray"></span>
      </div>
      <footer class="taskbar">
        <button class="start" aria-label="开始"><svg width="13" height="13"><path d="M0 2l5.500-.8V6H0zM6.500 1L13 0v6H6.500zM0 7h5.500v4.800L0 11zM6.500 7H13v6l-6.500-1z" fill="#fff" /></svg></button>
        <label class="search">
          <svg width="17" height="17"><circle cx="8.500" cy="8.500" r="6.700" fill="none" stroke="#111" stroke-width="2" /></svg>
          <input placeholder="在这里输入你要搜索的内容" />
          <svg width="10" height="14"><path d="M3 1.500q2-2 4 0v6q-2 2-4 0z" fill="none" stroke="#333" /><path d="M1 6q0 5 4 5t4-5M5 11v3" fill="none" stroke="#333" /></svg>
        </label>
        <div class="apps">
          <button aria-label="影音"><svg width="18" height="18"><path d="M1 7h16v10H1z" fill="#fff" /><path d="M0 2l16-1.500v3.500L1 6z" fill="#fff" /><path d="M3 1.500l3 4M8 1l3 4M13 .5l3 4" stroke="#17222a" stroke-width="1.500" /></svg></button>
          <button aria-label="浏览器"><svg width="18" height="18" viewBox="-9 -9 18 18">
            ${["#9a3bd0", "#e5342b", "#f39a1e", "#f7dd23", "#54b33d", "#2b8fdc"].map((c, i) => svg`<path transform="rotate(${i * 60 - 30})" d="M0 0Q-1-6 3-8.500Q8-7 8.500-2Q5-4 0 0z" fill=${c} />`)}
            <circle r="2" fill="#fff" /></svg></button>
          <button class="front" aria-label="AutoCAD"><svg width="18" height="17"><path d="M1 1h16v14H1z" fill="#777" /><path d="M8 11h9v5H8z" fill="#eee" /><path d="M2 13L7 0l4 3 2 8-5-1-2 4z" fill="#d8202a" /><path d="M7 0l2 7-4 2z" fill="#f26a6a" /></svg></button>
          <button aria-label="画图"><svg width="19" height="18"><path d="M1 12Q0 5 8 3q8-1 9 5-1 8-9 9-1-4-4-3-3 0-3-2z" fill="#a9d4ee" stroke="#dceefa" /><circle cx="5" cy="9" r="1.500" fill="#d9432f" /><circle cx="8" cy="6" r="1.500" fill="#57ad3e" /><circle cx="12" cy="6" r="1.500" fill="#f2cb2e" /><circle cx="10" cy="12" r="1.500" fill="#223" /><path d="M17 1l-5 14" stroke="#d98c3f" stroke-width="2" /></svg></button>
        </div>
      </footer>`;
  }

  private overlays() {
    return html`<svg class="arrow"><path d="M628 286L333 503M328 480l4 25 42-2" fill="none" stroke="#ffc914" stroke-width="4" stroke-linecap="round" stroke-linejoin="round" /></svg>
      <div class="mark">
        <svg class="toes" width="34" height="18"><ellipse cx="9" cy="11" rx="6" ry="8" fill="#fafafa" stroke="#c8c8c8" /><ellipse cx="25" cy="12" rx="7" ry="8" fill="#fafafa" stroke="#c8c8c8" /></svg>
        <div class="big">Bai</div><div class="small">jingyan</div>
      </div>
      <div class="brand">
        <svg width="44" height="60" viewBox="456 119 132 178" aria-label="3D66">
          <path d="M465 144L478 148 483 142 489 152 499 157 510 165 507 170 495 170Q488 180 490 190 503 200 528 201 561 201 568 215 574 226 569 238 567 247 572 262L574 293 566 293Q563 270 555 260 547 251 544 243 520 245 502 239L493 258 488 293 475 293 480 264Q477 242 467 228 456 212 459 195 463 180 471 170 475 160 471 154z" fill="#cfcfcf" />
          <path d="M489 149Q494 143 492 133M492 146Q520 150 540 151 556 150 562 143L584 130M500 148L510 138 511 127M510 138L504 131M517 149L525 136 530 124M533 150L530 138M544 143L552 140M540 151Q560 156 572 144M528 142L545 146 562 143" fill="none" stroke="#cfcfcf" stroke-width="3" stroke-linecap="round" />
        </svg>
        <div><div class="name">3D溜溜网</div><div class="site">3D66.COM</div></div>
      </div>`;
  }

  render() {
    return html`${this.header()}${this.bars()}${this.main()}${this.footer()}${this.overlays()}`;
  }
}
